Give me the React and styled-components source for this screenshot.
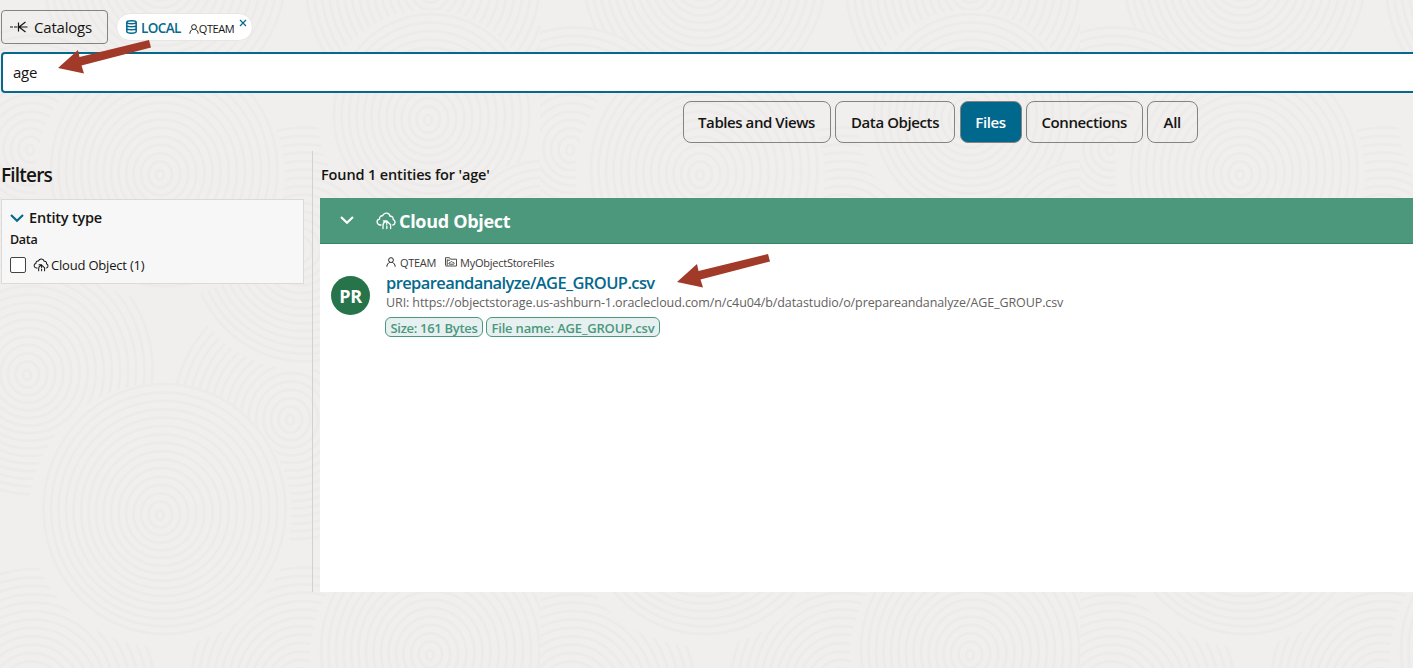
import React from "react";
import styled, { createGlobalStyle } from "styled-components";

const Global = createGlobalStyle`
  * { box-sizing: border-box; }
  body { margin: 0; background: #f0efed; font-family: "Open Sans", "Noto Sans", sans-serif; color: #161513; overflow: hidden; }
`;

const Page = styled.div`
  position: relative;
  width: 1413px;
  height: 668px;
  overflow: hidden;
`;

const Backdrop = styled.svg`
  position: absolute;
  inset: 0;
  z-index: -1;
`;

const Header = styled.header`
  display: flex;
  align-items: flex-start;
  gap: 8px;
  height: 52px;
  padding: 10px 0 0 1px;
`;

const Text = styled.span`
  font-size: ${(p) => p.$size || 13}px;
  font-weight: ${(p) => p.$weight || 400};
  letter-spacing: ${(p) => p.$track || 0}px;
  color: ${(p) => p.$color || "inherit"};
  line-height: 1;
  white-space: nowrap;
`;

const CatalogsButton = styled.button`
  display: flex;
  align-items: center;
  gap: 6px;
  width: 107px;
  height: 34px;
  padding: 0 0 0 7px;
  background: transparent;
  border: 1px solid #85827f;
  border-radius: 4px;
  font-family: inherit;
  color: #161513;
`;

const Chip = styled.div`
  display: flex;
  align-items: center;
  width: 137px;
  height: 28px;
  margin-top: 3px;
  padding-left: 9px;
  background: #fff;
  border: 1px solid #e8e6e4;
  border-radius: 14px;
`;

const ChipLabel = styled.div`
  display: flex;
  align-items: center;
  padding-top: 3px;
`;

const SearchBox = styled.div`
  display: flex;
  align-items: center;
  width: 1420px;
  height: 41px;
  margin-left: 1px;
  padding-left: 10px;
  background: #fff;
  border: 2px solid #04698d;
  border-radius: 4px;
`;

const Tabs = styled.nav`
  display: flex;
  gap: 4.5px;
  height: 58px;
  padding: 7.500px 0 0 682.500px;
`;

const Tab = styled.button`
  display: flex;
  flex: none;
  align-items: center;
  justify-content: center;
  width: ${(p) => p.$width}px;
  height: 42.5px;
  padding: 2px 0 0;
  border: 1px solid #85827f;
  border-radius: 8px;
  background: ${(p) => (p.$active ? "#00688c" : "transparent")};
  color: ${(p) => (p.$active ? "#fff" : "#161513")};
  font-family: inherit;
`;

const Body = styled.div`
  display: flex;
  height: 441px;
`;

const Sidebar = styled.aside`
  width: 313px;
  padding: 15px 8px 0 1px;
  border-right: 1px solid #d3d1cf;
`;

const Heading = styled.div`
  display: flex;
  align-items: center;
  height: ${(p) => p.$height}px;
`;

const FilterCard = styled.section`
  display: flex;
  flex-direction: column;
  height: 85px;
  margin-top: 14px;
  padding: 6px 0 0 8px;
  background: #f7f7f7;
  border: 1px solid #dcdad8;
`;

const Line = styled.div`
  display: flex;
  align-items: center;
  gap: ${(p) => p.$gap || 0}px;
  height: ${(p) => p.$height}px;
`;

const TagRow = styled(Line)`
  margin-left: -1px;
`;

const Checkbox = styled.span`
  width: 16px;
  height: 16px;
  border: 1.5px solid #45423f;
  border-radius: 2px;
  background: #fff;
`;

const Results = styled.main`
  flex: 1;
  display: flex;
  flex-direction: column;
  padding: 14px 0 0 7px;
`;

const ResultCount = styled(Heading)`
  padding-left: 1px;
`;

const GroupBar = styled.div`
  display: flex;
  align-items: center;
  height: 46px;
  margin-top: 13px;
  padding-left: 20px;
  background: #4b987d;
  border-bottom: 1px solid #378468;
  color: #fff;
`;

const Panel = styled.div`
  flex: 1;
  display: flex;
  padding: 9px 0 0 11px;
  background: #fff;
`;

const Avatar = styled.div`
  display: flex;
  align-items: center;
  justify-content: center;
  width: 39px;
  height: 39px;
  margin: 23px 16px 0 0;
  border-radius: 50%;
  background: #27734a;
`;

const Entry = styled.div`
  display: flex;
  flex-direction: column;
`;

const Tag = styled.span`
  display: flex;
  align-items: center;
  justify-content: center;
  width: ${(p) => p.$width}px;
  height: 20px;
  padding-top: 3px;
  background: #e6f0f0;
  border: 1px solid #4b987d;
  border-radius: 6px;
`;

const Arrow = styled.svg`
  position: absolute;
  left: ${(p) => p.$x}px;
  top: ${(p) => p.$y}px;
`;

const Spacer = styled.span`
  width: ${(p) => p.$w}px;
`;

const Close = styled.svg`
  align-self: flex-start;
  margin: 5px 0 0 5px;
`;

const SWIRLS = [
  [160, -20, 130], [430, -10, 140], [30, 150, 125], [27, 375, 135], [290, 420, 130],
  [300, 250, 120], [160, 175, 125], [428, 120, 110], [540, 250, 90],
  [30, 700, 130], [300, 690, 120], [160, 515, 132], [430, 655, 120],
];

const Swirls = () => (
  <Backdrop width="1413" height="668" aria-hidden="true">
    <defs>
      <pattern id="swirls" width="540" height="668" patternUnits="userSpaceOnUse">
        {SWIRLS.map(([x, y, r], i) => (
          <g key={i} fill="none" stroke="#ecebe9" strokeWidth="2.500">
            <circle cx={x} cy={y} r={r} fill="#f0efed" stroke="none" />
            {Array.from({ length: Math.floor(r / 8) }, (_, k) => (
              <ellipse key={k} cx={x + k * 0.3} cy={y - k * 0.4} rx={4 + k * 7.800} ry={5 + k * 8} />
            ))}
          </g>
        ))}
      </pattern>
    </defs>
    <rect width="1413" height="668" fill="url(#swirls)" />
  </Backdrop>
);

const CloudIcon = ({ w, h, sw = 1.3 }) => (
  <svg width={w} height={h} viewBox="0 0 20 18" fill="none" stroke="currentColor" strokeWidth={sw} strokeLinejoin="round" strokeLinecap="round">
    <path d="M5 13H3.9C.3 12.200.2 7.700 3.500 7.200C3.300 4.600 5 3.500 6.600 3.800C8.300.2 13.200.3 14.100 4.300C16.500 4 17.600 5.800 17 7.500C20.200 8.700 19.200 12.700 16.800 13" />
    <path d="M7 16.500V13.400C7 11.500 8 10 9.800 9.500M7.400 8.800H10.800V12.300M10.800 9L14.600 12.800V16.500M10.800 14V16.500" />
  </svg>
);

const UserIcon = ({ size }) => (
  <svg width={size} height={size} viewBox="0 0 12 12" fill="none" stroke="currentColor" strokeWidth="1.1">
    <circle cx="6" cy="3.700" r="2.900" />
    <path d="M1 11.700C1 8.800 2.700 7.200 4.500 6.300M11 11.700C11 8.800 9.300 7.200 7.500 6.300" />
  </svg>
);

const FolderIcon = () => (
  <svg width="12" height="10" viewBox="0 0 12 10" fill="none" stroke="#4f4c49" strokeWidth="1">
    <path d="M.5 8.500V.7H4.500L5.500 2.200H11.500V9H.5M2.200 2.500V8.500M2.200 3.200H5" />
    <path d="M4.500 7.200C3.300 7 3.800 5.500 5 5.700C5.500 4.300 7.300 4.400 7.700 5.400C9.200 5.100 9.800 6.800 8.500 7.200Z" />
  </svg>
);

const DatabaseIcon = () => (
  <svg width="11" height="14" viewBox="0 0 11 14" fill="none" stroke="#04698d" strokeWidth="1.500">
    <ellipse cx="5.500" cy="2.300" rx="4.700" ry="1.500" />
    <path d="M.8 2.300V11.500C.8 13.700 10.200 13.700 10.200 11.500V2.300M.8 5.200C.8 7.200 10.200 7.200 10.200 5.200M.8 8.300C.8 10.300 10.200 10.300 10.200 8.300" />
  </svg>
);

const CatalogIcon = () => (
  <svg width="19" height="12" viewBox="0 0 19 12" fill="none" stroke="#161513" strokeWidth="1.200">
    <path d="M1 6H4M5 6H8.500M9.500 1.500V10.500M18.500 6H10M16.500 1L10 6L16.500 11" />
  </svg>
);

const Chevron = ({ color }) => (
  <svg width="14" height="9" viewBox="0 0 14 9" fill="none" stroke={color} strokeWidth="2.200">
    <path d="M1 1L7 6.700L13 1" />
  </svg>
);

const RedArrow = ({ x, y }) => (
  <Arrow $x={x} $y={y} width="94" height="36" viewBox="0 0 94 36">
    <path d="M0 28L20 10L21.500 17L91 0L93 7.500L23.500 25.500L26 33.500Z" fill="#a23a2a" />
  </Arrow>
);

const TABS = [
  ["Tables and Views", 148, -0.43],
  ["Data Objects", 120, -0.4],
  ["Files", 62, -0.4],
  ["Connections", 116.5, -0.4],
  ["All", 50.5, -0.3],
];

export default function App() {
  return (
    <Page>
      <Global />
      <Swirls />
      <Header>
        <CatalogsButton>
          <CatalogIcon />
          <Text $size={15} $track={-0.2}>Catalogs</Text>
        </CatalogsButton>
        <Chip>
          <DatabaseIcon />
          <Spacer $w={4} />
          <ChipLabel>
            <Text $size={13.5} $weight={600} $color="#04698d" $track={-0.6}>LOCAL</Text>
            <Spacer $w={8} />
            <UserIcon size={10} />
            <Text $size={11} $track={-0.4}>QTEAM</Text>
          </ChipLabel>
          <Close width="8" height="8" viewBox="0 0 8 8" stroke="#04698d" strokeWidth="1.200"><path d="M1 1L7 7M7 1L1 7" /></Close>
        </Chip>
      </Header>
      <SearchBox><Text $size={15} $track={-0.3}>age</Text></SearchBox>
      <Tabs>
        {TABS.map(([label, width, track]) => (
          <Tab key={label} $width={width} $active={label === "Files"}>
            <Text $size={15} $weight={600} $track={track}>{label}</Text>
          </Tab>
        ))}
      </Tabs>
      <Body>
        <Sidebar>
          <Heading $height={19}><Text $size={19} $weight={600} $track={-0.8}>Filters</Text></Heading>
          <FilterCard>
            <Line $height={24} $gap={5}>
              <Chevron color="#04698d" />
              <Text $size={14.500} $weight={600} $track={-0.2}>Entity type</Text>
            </Line>
            <Line $height={21}><Text $size={12.500} $weight={600} $track={-0.3}>Data</Text></Line>
            <Line $height={28}>
              <Checkbox />
              <Spacer $w={7} />
              <CloudIcon w={16} h={14} />
              <Spacer $w={2} />
              <Text $size={13} $track={-0.2}>Cloud Object (1)</Text>
            </Line>
          </FilterCard>
        </Sidebar>
        <Results>
          <ResultCount $height={20}><Text $size={14.500} $weight={600} $track={-0.13}>Found 1 entities for 'age'</Text></ResultCount>
          <GroupBar>
            <Chevron color="#fff" />
            <Spacer $w={22} />
            <CloudIcon w={20} h={18} />
            <Spacer $w={3} />
            <Text $size={18} $weight={700} $track={-0.3}>Cloud Object</Text>
          </GroupBar>
          <Panel>
            <Avatar><Text $size={18} $weight={700} $color="#fff" $track={-0.3}>PR</Text></Avatar>
            <Entry>
              <Line $height={18}>
                <UserIcon size={10} />
                <Spacer $w={4} />
                <Text $size={11} $track={-0.3} $color="#3c3936">QTEAM</Text>
                <Spacer $w={9} />
                <FolderIcon />
                <Spacer $w={3} />
                <Text $size={11} $track={-0.25} $color="#3c3936">MyObjectStoreFiles</Text>
              </Line>
              <Line $height={24}><Text $size={16.500} $weight={600} $color="#04698d" $track={-0.6}>prepareandanalyze/AGE_GROUP.csv</Text></Line>
              <Line $height={17}><Text $size={12.500} $color="#65625f" $track={-0.1}>URI: https://objectstorage.us-ashburn-1.oraclecloud.com/n/c4u04/b/datastudio/o/prepareandanalyze/AGE_GROUP.csv</Text></Line>
              <TagRow $height={30} $gap={3}>
                <Tag $width={98}><Text $size={13} $weight={600} $color="#4b987d" $track={-0.3}>Size: 161 Bytes</Text></Tag>
                <Tag $width={174}><Text $size={13} $weight={600} $color="#4b987d" $track={-0.18}>File name: AGE_GROUP.csv</Text></Tag>
              </TagRow>
            </Entry>
          </Panel>
        </Results>
      </Body>
      <RedArrow x={58} y={40} />
      <RedArrow x={677} y={254} />
    </Page>
  );
}
